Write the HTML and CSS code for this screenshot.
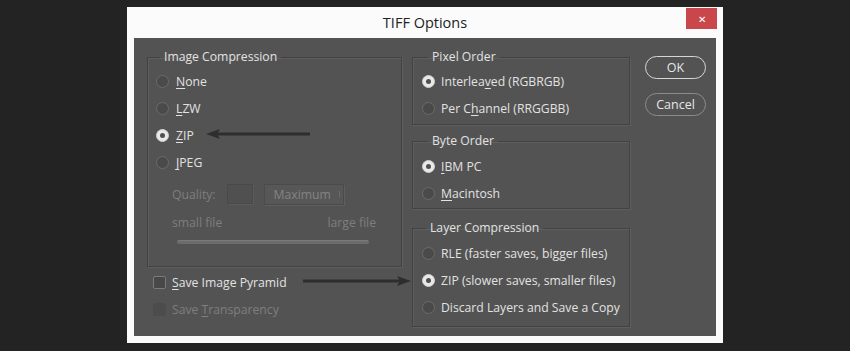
FILE: index.html
```html
<!DOCTYPE html>
<html>
<head>
<meta charset="utf-8">
<link rel="stylesheet" href="styles.css">
</head>
<body>
<div class="dialog">
  <div class="titlebar">
    <span></span>
    <span class="title">TIFF Options</span>
    <span class="close">&#x2715;</span>
  </div>
  <div class="panel">
    <div class="col-left">
      <fieldset class="group group-image">
        <legend>Image Compression</legend>
        <div class="opt"><span class="radio"></span><span><u>N</u>one</span></div>
        <div class="opt"><span class="radio"></span><span><u>L</u>ZW</span></div>
        <div class="opt"><span class="radio on"></span><span><u>Z</u>IP</span></div>
        <div class="opt"><span class="radio"></span><span><u>J</u>PEG</span></div>
        <div class="quality">
          <span class="dis">Quality:</span>
          <span class="qbox"></span>
          <span class="select">Maximum<span class="caret"></span></span>
        </div>
        <div class="sizes dis"><span>small file</span><span>large file</span></div>
        <div class="slider"></div>
      </fieldset>
      <div class="check-row"><span class="check"></span><span><u>S</u>ave Image Pyramid</span></div>
      <div class="check-row dis"><span class="check off"></span><span>Save <u>T</u>ransparency</span></div>
    </div>
    <div class="col-mid">
      <fieldset class="group g-pixel">
        <legend>Pixel Order</legend>
        <div class="opt"><span class="radio on"></span><span>Interlea<u>v</u>ed (RGBRGB)</span></div>
        <div class="opt"><span class="radio"></span><span>Per C<u>h</u>annel (RRGGBB)</span></div>
      </fieldset>
      <fieldset class="group g-byte">
        <legend>Byte Order</legend>
        <div class="opt"><span class="radio on"></span><span><u>I</u>BM PC</span></div>
        <div class="opt"><span class="radio"></span><span><u>M</u>acintosh</span></div>
      </fieldset>
      <fieldset class="group g-layer">
        <legend>Layer Compression</legend>
        <div class="opt"><span class="radio"></span><span>RLE (faster saves, bigger files)</span></div>
        <div class="opt"><span class="radio on"></span><span>ZIP (slower saves, smaller files)</span></div>
        <div class="opt"><span class="radio"></span><span>Discard Layers and Save a Copy</span></div>
      </fieldset>
    </div>
    <div class="col-buttons">
      <span class="btn btn-ok">OK</span>
      <span class="btn btn-cancel">Cancel</span>
    </div>
    <svg class="arrow arrow-zip" width="104" height="12" viewBox="0 0 104 12">
      <line x1="9" y1="6" x2="103" y2="6" stroke="#2e2e2e" stroke-width="3" stroke-linecap="round"/>
      <polygon points="0,6 14,1 11,6 14,11" fill="#2e2e2e"/>
    </svg>
    <svg class="arrow arrow-pyr" width="108" height="12" viewBox="0 0 108 12">
      <line x1="1" y1="6" x2="98" y2="6" stroke="#2e2e2e" stroke-width="3" stroke-linecap="round"/>
      <polygon points="108,6 94,1 97,6 94,11" fill="#2e2e2e"/>
    </svg>
  </div>
</div>
</body>
</html>
```
FILE: styles.css
```css
* { box-sizing: border-box; }
html, body { margin: 0; padding: 0; }
body {
  background: #232323;
  width: 850px;
  height: 351px;
  overflow: hidden;
  font-family: "Open Sans", "Noto Sans", sans-serif;
  font-size: 12.2px;
  color: #e2e2e2;
}
.dialog {
  margin: 7px 0 0 127px;
  width: 596px;
  height: 336px;
  background: #fbfbfb;
  display: flex;
  flex-direction: column;
}
.titlebar {
  height: 31px;
  display: grid;
  grid-template-columns: 1fr auto 1fr;
  align-items: center;
}
.title {
  font-size: 14.5px;
  color: #222;
}
.close {
  justify-self: end;
  align-self: start;
  margin: 1px 6px 0 0;
  width: 31px;
  height: 21px;
  background: #c9474a;
  color: #fff;
  font-size: 10px;
  display: flex;
  align-items: center;
  justify-content: center;
}
.panel {
  position: relative;
  margin: 0 7px 7px;
  flex: 1;
  background: #535353;
  display: flex;
  align-items: flex-start;
  padding: 11px 0 0 13px;
}
.group {
  margin: 0;
  padding: 3px 0 3px 8px;
  border: 1px solid #424242;
  box-shadow: 1px 1px 0 #5e5e5e, inset 1px 1px 0 #5e5e5e;
  min-width: 0;
}
.group legend {
  padding: 0 4px;
  margin-left: 4px;
  line-height: 16px;
  color: #e2e2e2;
}
.col-left { width: 255px; }
.group-image { padding-bottom: 22px; }
.opt {
  height: 27px;
  display: flex;
  align-items: center;
  gap: 7px;
}
u { text-decoration-thickness: 1px; text-underline-offset: 2px; }
.radio {
  width: 13px;
  height: 13px;
  border-radius: 50%;
  background: #4a4a4a;
  border: 1px solid #6b6b6b;
  flex: none;
  display: flex;
  align-items: center;
  justify-content: center;
}
.radio.on {
  background: #e9e9e9;
  border-color: #d0d0d0;
}
.radio.on::after {
  content: "";
  width: 5px;
  height: 5px;
  border-radius: 50%;
  background: #505050;
}
.dis { color: #7e7e7e; }
.quality {
  margin-top: 6px;
  height: 24px;
  display: flex;
  align-items: center;
  padding-left: 16px;
}
.qbox {
  margin-left: 11px;
  width: 26px;
  height: 20px;
  background: #505050;
  border: 1px solid #494949;
  box-shadow: 1px 1px 0 #5c5c5c;
}
.select {
  margin-left: 11px;
  width: 80px;
  height: 21px;
  background: #575757;
  border: 1px solid #4b4b4b;
  box-shadow: 1px 1px 0 #5e5e5e;
  color: #848484;
  display: flex;
  align-items: center;
  padding-left: 9px;
}
.caret {
  margin-left: auto;
  margin-right: 3px;
  width: 1px;
  height: 6px;
  background: #6a6a6a;
}
.sizes {
  margin-top: 8px;
  height: 17px;
  display: flex;
  align-items: center;
  justify-content: space-between;
  padding: 0 25px 0 16px;
}
.slider {
  margin: 9px 0 0 21px;
  width: 192px;
  height: 4px;
  background: #6c6c6c;
  border-top: 1px solid #7a7a7a;
  border-radius: 2px;
}
.check-row {
  height: 27px;
  display: flex;
  align-items: center;
  gap: 6px;
  padding-left: 6px;
}
.check-row:first-of-type { margin-top: 2px; }
.check {
  width: 13px;
  height: 13px;
  border: 1px solid #7a7a7a;
  background: #484848;
  border-radius: 2px;
  flex: none;
}
.check.off {
  border-color: #4c4c4c;
  background: #4c4c4c;
}
.col-mid {
  margin-left: 10px;
  width: 218px;
  display: flex;
  flex-direction: column;
}
.col-mid .group { padding-left: 9px; }
.col-mid .opt { gap: 6px; }
.col-mid .group legend { margin-left: 6px; }
.g-pixel { padding-top: 3px; padding-bottom: 2px; }
.g-byte { margin-top: 8px; padding-top: 4px; padding-bottom: 1px; }
.g-layer { margin-top: 11px; padding-top: 4px; padding-bottom: 5px; }
.col-mid .g-layer legend { margin-left: 4px; }
.col-buttons {
  margin: 7px 0 0 15px;
  width: 61px;
  display: flex;
  flex-direction: column;
  gap: 14px;
}
.btn {
  height: 23px;
  border-radius: 12px;
  border: 1.5px solid #d6d6d6;
  display: flex;
  align-items: center;
  justify-content: center;
  color: #e6e6e6;
  font-size: 12.5px;
}
.btn-cancel { border-color: #8c8c8c; }
.arrow { position: absolute; }
.arrow-zip { left: 72px; top: 90px; }
.arrow-pyr { left: 169px; top: 237px; }
```
